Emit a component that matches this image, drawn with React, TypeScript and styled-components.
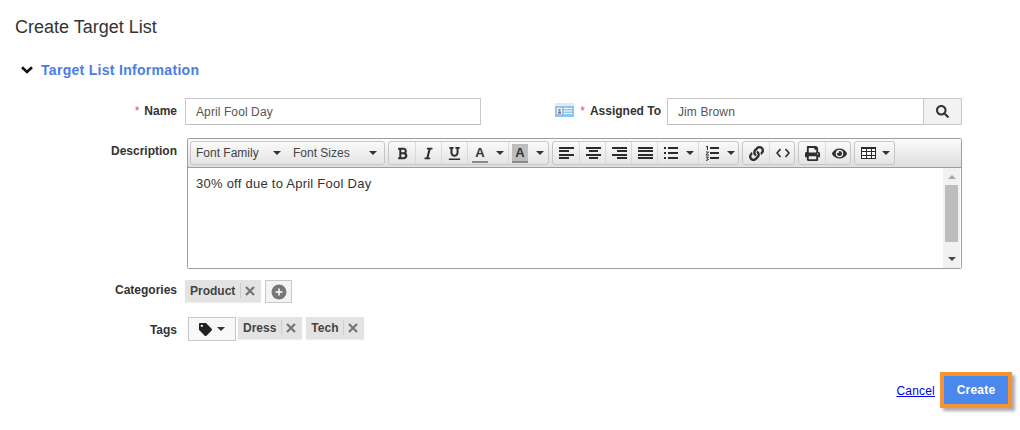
import React from "react";
import styled, { createGlobalStyle } from "styled-components";
import { FaBold, FaItalic, FaUnderline, FaLink, FaPrint, FaEye, FaTag, FaSearch } from "react-icons/fa";

const Global = createGlobalStyle`
  html, body { margin: 0; padding: 0; background: #fff; }
  body { font-family: "Liberation Sans", Arial, sans-serif; font-size: 12px; color: #333; }
`;

const Page = styled.div`
  width: 1020px;
  height: 430px;
  overflow: hidden;
  box-sizing: border-box;
  padding: 17px 8px 0 15px;
`;
const Title = styled.h1`
  margin: 0;
  height: 22px;
  font-size: 18px;
  line-height: 21px;
  font-weight: 400;
  color: #333;
`;
const SectionHead = styled.div`
  display: flex;
  align-items: center;
  gap: 8px;
  margin: 20px 0 0 6px;
  height: 22px;
`;
const SectionTitle = styled.h2`
  margin: 0;
  font-size: 14px;
  line-height: 18px;
  letter-spacing: 0.3px;
  font-weight: 700;
  color: #4a7de6;
`;
const Row = styled.div<{ $top: number }>`
  display: flex;
  align-items: flex-start;
  margin-top: ${(p) => p.$top}px;
  margin-left: -15px;
`;
const LabelCell = styled.div<{ $pt?: number }>`
  width: 177px;
  margin-right: 8px;
  flex: none;
  text-align: right;
  font-weight: 700;
  font-size: 12px;
  line-height: 14px;
  color: #333;
  padding-top: ${(p) => p.$pt ?? 0}px;
`;
const Star = styled.span`
  color: #f0436e;
  font-weight: 400;
  margin-right: 5px;
`;
const Input = styled.div<{ $w: number }>`
  box-sizing: border-box;
  width: ${(p) => p.$w}px;
  height: 27px;
  border: 1px solid #c8c8c8;
  border-bottom-color: #c0c0c0;
  padding-left: 10px;
  font-size: 12px;
  line-height: 27px;
  letter-spacing: 0.1px;
  color: #555;
  background: #fff;
  flex: none;
`;
const AssignedLabel = styled.div`
  display: flex;
  align-items: center;
  width: 186px;
  padding: 0 6px 2px 0;
  box-sizing: border-box;
  justify-content: flex-end;
  height: 27px;
  font-weight: 700;
  color: #333;
  flex: none;
`;
const CardIcon = styled.svg`
  margin-right: 6px;
  margin-top: -2px;
`;
const SearchBtn = styled.div`
  box-sizing: border-box;
  width: 39px;
  height: 27px;
  margin-left: -1px;
  border: 1px solid #c8c8c8;
  background: #f2f2f2;
  display: flex;
  align-items: center;
  justify-content: center;
  color: #333;
  flex: none;
`;
const Editor = styled.div`
  box-sizing: border-box;
  width: 775px;
  height: 131px;
  margin-left: 2px;
  border: 1px solid #9e9e9e;
  border-radius: 2px;
  flex: none;
`;
const Toolbar = styled.div`
  box-sizing: border-box;
  height: 29px;
  padding: 2px 0 0 2px;
  display: flex;
  gap: 3px;
  background: linear-gradient(#fbfbfb, #dedede);
  border-bottom: 1px solid #9e9e9e;
`;
const Group = styled.div`
  box-sizing: border-box;
  height: 24px;
  display: flex;
  border: 1px solid #c6c6c6;
  border-radius: 3px;
  background: linear-gradient(#fafafa, #e4e4e4);
`;
const ToolBtn = styled.div<{ $w: number; $line?: boolean; $pad?: number; $gap?: number }>`
  box-sizing: border-box;
  width: ${(p) => p.$w}px;
  height: 100%;
  display: flex;
  align-items: center;
  padding-left: ${(p) => p.$pad ?? 6}px;
  gap: ${(p) => p.$gap ?? 8}px;
  color: #2e2e2e;
  border-left: ${(p) => (p.$line ? "1px solid #dadada" : "none")};
`;
const SelectBtn = styled.div<{ $w: number }>`
  box-sizing: border-box;
  width: ${(p) => p.$w}px;
  height: 100%;
  display: flex;
  align-items: center;
  justify-content: space-between;
  padding: 0 7px 0 5px;
  font-size: 12px;
  color: #444;
`;
const Caret = styled.span`
  display: inline-block;
  width: 0;
  height: 0;
  border-left: 4px solid transparent;
  border-right: 4px solid transparent;
  border-top: 4px solid #333;
  flex: none;
`;
const ColorA = styled.span<{ $bg?: boolean }>`
  box-sizing: border-box;
  width: 16px;
  height: 19px;
  display: block;
  text-align: center;
  font-weight: 700;
  font-size: 13px;
  line-height: 17px;
  color: #2b3340;
  background: ${(p) => (p.$bg ? "#bdbdbd" : "transparent")};
  border-bottom: 2px solid #8a8a8a;
`;
const EditorBody = styled.div`
  height: 100px;
  display: flex;
  background: #fff;
`;
const EditorText = styled.div`
  flex: 1;
  padding: 8px;
  font-size: 13px;
  line-height: 15px;
  letter-spacing: 0.25px;
  color: #333;
`;
const Scrollbar = styled.div`
  width: 17px;
  margin-right: 1px;
  background: #f1f1f1;
  display: flex;
  flex-direction: column;
  align-items: center;
`;
const ScrollArrow = styled.span<{ $up?: boolean }>`
  width: 0;
  height: 0;
  margin: ${(p) => (p.$up ? "7px 0 6px" : "15px 0 0")};
  border-left: 4px solid transparent;
  border-right: 4px solid transparent;
  ${(p) => (p.$up ? "border-bottom: 4px solid #a8a8a8;" : "border-top: 4px solid #444;")}
`;
const ScrollThumb = styled.span`
  width: 13px;
  height: 57px;
  background: #bdbdbd;
`;
const Chip = styled.div`
  box-sizing: border-box;
  height: 22px;
  display: flex;
  align-items: center;
  padding: 0 6px 1px 5px;
  background: #e3e3e3;
  box-shadow: 0 1px 1px #eee;
  font-weight: 700;
  font-size: 12px;
  color: #444;
  flex: none;
`;
const ChipDivider = styled.span`
  width: 1px;
  height: 15px;
  margin: 0 4px 0 5px;
  background: #cdcdcd;
`;
const AddBtn = styled.div`
  box-sizing: border-box;
  width: 27px;
  height: 23px;
  margin-left: 4px;
  border: 1px solid #c8c8c8;
  background: #f4f4f4;
  display: flex;
  align-items: center;
  justify-content: center;
`;
const TagBtn = styled.div`
  box-sizing: border-box;
  width: 48px;
  height: 24px;
  margin: 0 2px 0 3px;
  border: 1px solid #c8c8c8;
  background: #f8f8f8;
  display: flex;
  align-items: center;
  justify-content: center;
  gap: 5px;
  color: #222;
  flex: none;
`;
const Spaced = styled.div`
  margin-left: 4px;
`;
const Footer = styled.div`
  display: flex;
  justify-content: flex-end;
  align-items: center;
  gap: 5px;
  margin-top: 31px;
`;
const CancelLink = styled.a`
  font-size: 12px;
  letter-spacing: 0.2px;
  color: #0000ee;
  text-decoration: underline;
  margin-top: 1px;
`;
const CreateBtn = styled.button`
  box-sizing: border-box;
  width: 72px;
  height: 36px;
  border: 4px solid #f7922e;
  background: #4a88ee;
  color: #fff;
  font-family: inherit;
  font-weight: 700;
  font-size: 12px;
  letter-spacing: 0.2px;
  padding: 0;
  box-shadow: 3px 3px 3px #aaa;
`;

const Bars = ({ rows }: { rows: [number, number][] }) => (
  <svg width="15" height="12" viewBox="0 0 15 12" shapeRendering="crispEdges">
    {rows.map(([x, w], i) => (
      <rect key={i} x={x} y={i * 3.34} width={w} height="2" fill="#2b2b2b" />
    ))}
  </svg>
);
const ListUl = () => (
  <svg width="14" height="12" viewBox="0 0 14 12" shapeRendering="crispEdges">
    {[0, 5, 10].map((y) => (
      <g key={y} fill="#2b2b2b">
        <rect x="0" y={y} width="2" height="2" />
        <rect x="4" y={y} width="10" height="2" />
      </g>
    ))}
  </svg>
);
const ListOl = () => (
  <svg width="14" height="15" viewBox="0 0 14 15">
    <g fill="#2b2b2b" shapeRendering="crispEdges">
      <rect x="5" y="1" width="9" height="2" />
      <rect x="5" y="6" width="9" height="2" />
      <rect x="5" y="11" width="9" height="2" />
    </g>
    <path d="M1 1l1.5-1V4M1 6h2.5L1 9h3M1 11h2.5L2 12.5l1.5 1L1 14.5" fill="none" stroke="#2b2b2b" />
  </svg>
);
const CodeIcon = () => (
  <svg width="14" height="10" viewBox="0 0 14 10" fill="none" stroke="#2b2b2b" strokeWidth="1.6">
    <path d="M4.5 1L1 5l3.5 4M9.5 1L13 5l-3.5 4" />
  </svg>
);
const TableIcon = () => (
  <svg width="15" height="12" viewBox="0 0 15 12" shapeRendering="crispEdges">
    <rect x="0.5" y="0.5" width="14" height="11" fill="#fff" stroke="#2b2b2b" />
    <rect x="0" y="0" width="15" height="2" fill="#2b2b2b" />
    <path d="M5.5 0v12M10.5 0v12M0 4.5h15M0 8.5h15" stroke="#2b2b2b" />
  </svg>
);
const Cross = () => (
  <svg width="10" height="10" viewBox="0 0 10 10" stroke="#757575" strokeWidth="2.2">
    <path d="M1 1l8 8M9 1l-8 8" />
  </svg>
);
const Chevron = () => (
  <svg width="12" height="8" viewBox="0 0 12 8" fill="none" stroke="#111" strokeWidth="2.6">
    <path d="M1 1.2l5 4.8 5-4.8" />
  </svg>
);

export default function App() {
  return (
    <Page>
      <Global />
      <Title>Create Target List</Title>
      <SectionHead>
        <Chevron />
        <SectionTitle>Target List Information</SectionTitle>
      </SectionHead>

      <Row $top={17}>
        <LabelCell $pt={6}>
          <Star>*</Star>Name
        </LabelCell>
        <Input $w={296}>April Fool Day</Input>
        <AssignedLabel>
          <CardIcon width="19" height="14" viewBox="0 0 19 14">
            <rect width="19" height="14" fill="#8cc6ef" />
            <rect y="0" width="19" height="3" fill="#dcebf6" />
            <rect x="2" y="5" width="5" height="6" fill="#eef3f6" />
            <rect x="3.5" y="6" width="2" height="2" fill="#c46a5a" />
            <rect x="3" y="8.5" width="3" height="2" fill="#b05a5a" />
            <path d="M9 5.5h8M9 8h8M9 10.5h8" stroke="#fff" />
          </CardIcon>
          <Star>*</Star>Assigned To
        </AssignedLabel>
        <Input $w={257}>Jim Brown</Input>
        <SearchBtn>
          <FaSearch size={13} />
        </SearchBtn>
      </Row>

      <Row $top={13}>
        <LabelCell $pt={6}>Description</LabelCell>
        <Editor>
          <Toolbar>
            <Group>
              <SelectBtn $w={97}>
                Font Family <Caret />
              </SelectBtn>
              <SelectBtn $w={96}>
                Font Sizes <Caret />
              </SelectBtn>
            </Group>
            <Group>
              <ToolBtn $w={26} $pad={7}><FaBold size={13} /></ToolBtn>
              <ToolBtn $w={26} $line $pad={6}><FaItalic size={13} /></ToolBtn>
              <ToolBtn $w={26} $line $pad={6}><FaUnderline size={13} /></ToolBtn>
              <ToolBtn $w={41} $line $pad={4}><ColorA>A</ColorA><Caret /></ToolBtn>
              <ToolBtn $w={40} $line $pad={3}><ColorA $bg>A</ColorA><Caret /></ToolBtn>
            </Group>
            <Group>
              <ToolBtn $w={26}><Bars rows={[[0, 15], [0, 10], [0, 15], [0, 10]]} /></ToolBtn>
              <ToolBtn $w={26} $line><Bars rows={[[0, 15], [3, 9], [0, 15], [3, 9]]} /></ToolBtn>
              <ToolBtn $w={26} $line><Bars rows={[[0, 15], [5, 10], [0, 15], [5, 10]]} /></ToolBtn>
              <ToolBtn $w={26} $line><Bars rows={[[0, 15], [0, 15], [0, 15], [0, 15]]} /></ToolBtn>
              <ToolBtn $w={41} $line $pad={6}><ListUl /><Caret /></ToolBtn>
              <ToolBtn $w={40} $line $pad={6}><ListOl /><Caret /></ToolBtn>
            </Group>
            <Group>
              <ToolBtn $w={26}><FaLink size={15} /></ToolBtn>
              <ToolBtn $w={25} $line><CodeIcon /></ToolBtn>
            </Group>
            <Group>
              <ToolBtn $w={26}><FaPrint size={15} /></ToolBtn>
              <ToolBtn $w={25} $line><FaEye size={15} /></ToolBtn>
            </Group>
            <Group>
              <ToolBtn $w={39} $gap={6}><TableIcon /><Caret /></ToolBtn>
            </Group>
          </Toolbar>
          <EditorBody>
            <EditorText>30% off due to April Fool Day</EditorText>
            <Scrollbar>
              <ScrollArrow $up />
              <ScrollThumb />
              <ScrollArrow />
            </Scrollbar>
          </EditorBody>
        </Editor>
      </Row>

      <Row $top={11}>
        <LabelCell $pt={3}>Categories</LabelCell>
        <Chip>
          Product
          <ChipDivider />
          <Cross />
        </Chip>
        <AddBtn>
          <svg width="16" height="16" viewBox="0 0 16 16">
            <circle cx="8" cy="8" r="7.5" fill="#777" />
            <path d="M8 4.5v7M4.5 8h7" stroke="#fff" strokeWidth="1.5" />
          </svg>
        </AddBtn>
      </Row>

      <Row $top={14}>
        <LabelCell $pt={6}>Tags</LabelCell>
        <TagBtn>
          <FaTag size={13} />
          <Caret />
        </TagBtn>
        <Chip>
          Dress
          <ChipDivider />
          <Cross />
        </Chip>
        <Spaced>
          <Chip>
            Tech
            <ChipDivider />
            <Cross />
          </Chip>
        </Spaced>
      </Row>

      <Footer>
        <CancelLink>Cancel</CancelLink>
        <CreateBtn>Create</CreateBtn>
      </Footer>
    </Page>
  );
}
